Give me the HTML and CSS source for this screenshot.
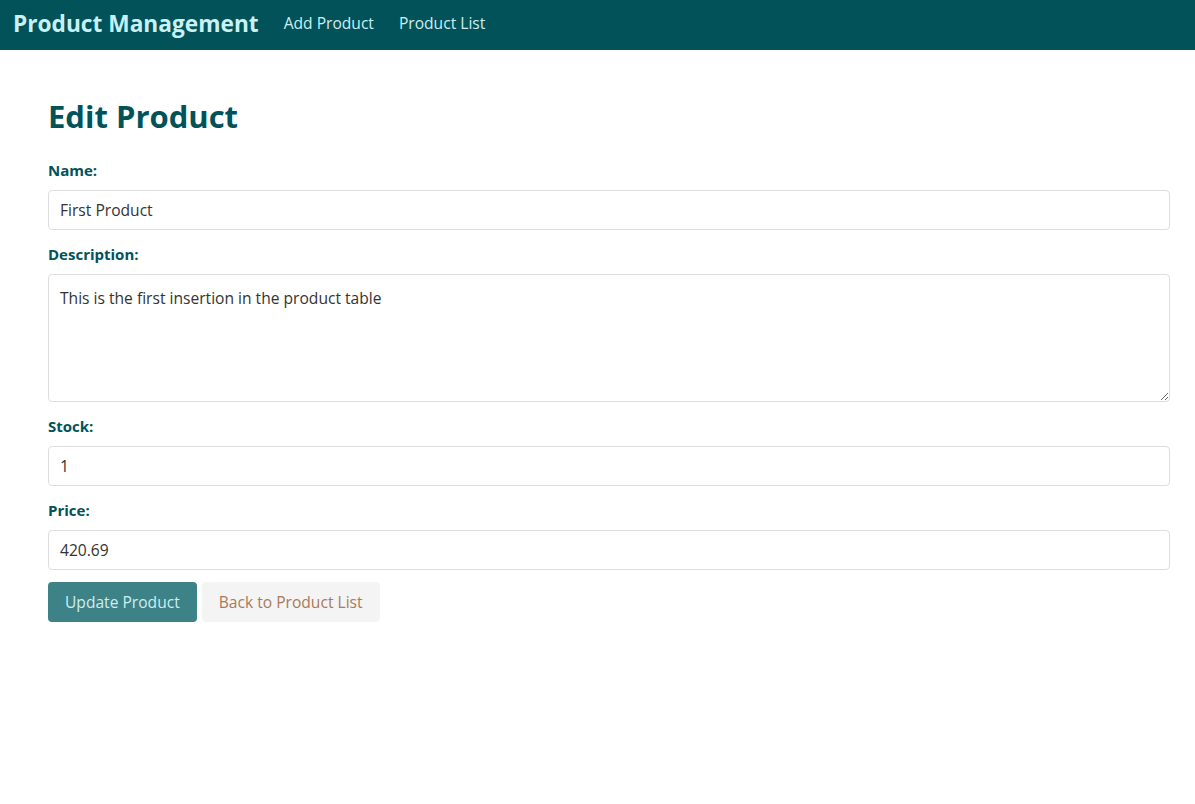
FILE: index.html
```html
<!DOCTYPE html>
<html lang="en">
<head>
<meta charset="utf-8">
<title>Edit Product</title>
<link rel="stylesheet" href="styles.css">
</head>
<body>
<nav class="navbar">
  <a class="brand" href="#">Product Management</a>
  <a class="nav-link" href="#">Add Product</a>
  <a class="nav-link" href="#">Product List</a>
</nav>
<main class="container">
  <h1 class="title">Edit Product</h1>
  <form class="form">
    <label class="label" for="name">Name:</label>
    <input class="field" id="name" type="text" value="First Product">
    <label class="label" for="desc">Description:</label>
    <textarea class="field area" id="desc">This is the first insertion in the product table</textarea>
    <label class="label" for="stock">Stock:</label>
    <input class="field" id="stock" type="text" value="1">
    <label class="label" for="price">Price:</label>
    <input class="field" id="price" type="text" value="420.69">
    <div class="actions">
      <button class="btn btn-primary" type="button">Update Product</button>
      <button class="btn btn-secondary" type="button">Back to Product List</button>
    </div>
  </form>
</main>
</body>
</html>
```
FILE: styles.css
```css
* { box-sizing: border-box; }
body {
  margin: 0;
  font-family: "Open Sans", "Noto Sans", sans-serif;
  color: #333;
  background: #fff;
}
.navbar {
  height: 50px;
  background: #02525a;
  display: flex;
  align-items: center;
  padding: 0 13px 4px;
}
.brand {
  color: #c8f1f5;
  font-weight: 700;
  font-size: 22.7px;
  text-decoration: none;
  margin-right: 25px;
}
.nav-link {
  color: #cdeef1;
  font-size: 15.6px;
  text-decoration: none;
  margin-right: 25px;
}
.container {
  padding: 38px 25px 0 48px;
}
.title {
  margin: 0 0 14px;
  font-size: 31px;
  line-height: 56px;
  color: #02525a;
  font-weight: 700;
}
.form {
  display: flex;
  flex-direction: column;
  align-items: stretch;
}
.label {
  font-weight: 700;
  font-size: 15px;
  line-height: 24px;
  color: #02525a;
  margin: 12px 0 8px;
}
.label:first-child { margin-top: 0; }
.field {
  font-family: inherit;
  font-size: 15.6px;
  color: #333;
  height: 40px;
  padding: 8px 11px;
  border: 1px solid #ddd;
  border-radius: 4px;
  background: #fff;
}
.area {
  height: 128px;
  resize: vertical;
  line-height: 24px;
  padding-top: 11px;
}
.actions {
  display: flex;
  gap: 5px;
  margin-top: 12px;
}
.btn {
  font-family: inherit;
  font-size: 15.6px;
  height: 40px;
  padding: 0 17px;
  border: none;
  border-radius: 4px;
}
.btn-primary {
  background: #3d8287;
  color: #cdeef0;
}
.btn-secondary {
  background: #f4f4f4;
  color: #a87a5a;
}
```
